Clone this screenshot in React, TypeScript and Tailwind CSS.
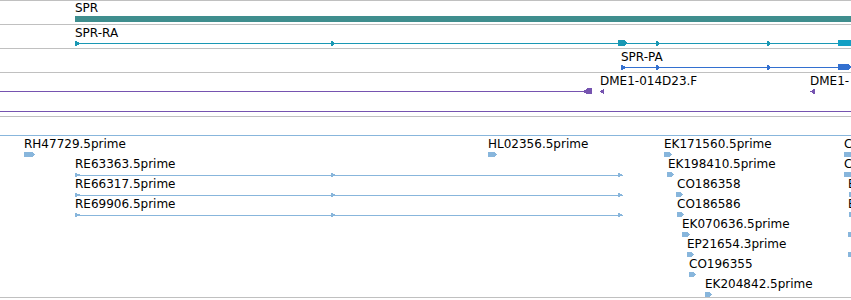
import React from "react";

type Label = { x: number; y: number; t: string };

const TEAL = "#3f8e8e";
const CYAN = "#1a98b4";
const BLUE = "#3370d0";
const PURPLE = "#7654b0";
const EST = "#88b6dc";

function right(x: number, w: number, cy: number, h = 5) {
  const t = cy - h / 2;
  const b = cy + h / 2;
  const k = Math.min(3, w);
  return `${x},${t} ${x + w - k},${t} ${x + w},${cy} ${x + w - k},${b} ${x},${b}`;
}
function tri(x: number, cy: number, w = 5, h = 6) {
  return `${x},${cy - h / 2} ${x + w},${cy} ${x},${cy + h / 2}`;
}
function triL(x: number, cy: number, w = 4, h = 6) {
  return `${x},${cy} ${x + w},${cy - h / 2} ${x + w},${cy + h / 2}`;
}

function Labels({ items }: { items: Label[] }) {
  return (
    <>
      {items.map((l, i) => (
        <span
          key={i}
          className="absolute whitespace-nowrap"
          style={{ left: l.x, top: l.y }}
        >
          {l.t}
        </span>
      ))}
    </>
  );
}

function Track({
  h,
  children,
  labels,
}: {
  h: number;
  children: React.ReactNode;
  labels: Label[];
}) {
  return (
    <div className="relative border-b border-[#c0c0c0]" style={{ height: h + 1 }}>
      <svg
        className="absolute left-0 top-0"
        width={851}
        height={h}
        viewBox={`0 0 851 ${h}`}
        shapeRendering="crispEdges"
      >
        {children}
      </svg>
      <Labels items={labels} />
    </div>
  );
}

const estRows: { labels: Label[]; glyphs: { x: number; w: number }[] }[] = [
  {
    labels: [
      { x: 24, y: 0, t: "RH47729.5prime" },
      { x: 488, y: 0, t: "HL02356.5prime" },
      { x: 664, y: 0, t: "EK171560.5prime" },
      { x: 844, y: 0, t: "C" },
    ],
    glyphs: [
      { x: 24, w: 11 },
      { x: 488, w: 9 },
      { x: 664, w: 8 },
      { x: 844, w: 9 },
    ],
  },
  {
    labels: [
      { x: 75, y: 0, t: "RE63363.5prime" },
      { x: 668, y: 0, t: "EK198410.5prime" },
      { x: 844, y: 0, t: "C" },
    ],
    glyphs: [
      { x: 667, w: 7 },
      { x: 844, w: 9 },
    ],
  },
  {
    labels: [
      { x: 75, y: 0, t: "RE66317.5prime" },
      { x: 677, y: 0, t: "CO186358" },
      { x: 848, y: 0, t: "E" },
    ],
    glyphs: [
      { x: 676, w: 7 },
      { x: 849, w: 4 },
    ],
  },
  {
    labels: [
      { x: 75, y: 0, t: "RE69906.5prime" },
      { x: 677, y: 0, t: "CO186586" },
      { x: 848, y: 0, t: "E" },
    ],
    glyphs: [
      { x: 677, w: 7 },
      { x: 849, w: 4 },
    ],
  },
  {
    labels: [{ x: 682, y: 0, t: "EK070636.5prime" }],
    glyphs: [
      { x: 682, w: 8 },
      { x: 848, w: 5 },
    ],
  },
  {
    labels: [{ x: 687, y: 0, t: "EP21654.3prime" }],
    glyphs: [
      { x: 687, w: 7 },
      { x: 848, w: 5 },
    ],
  },
  {
    labels: [{ x: 689, y: 0, t: "CO196355" }],
    glyphs: [{ x: 689, w: 7 }],
  },
  {
    labels: [{ x: 705, y: 0, t: "EK204842.5prime" }],
    glyphs: [{ x: 705, w: 7 }],
  },
];

export default function App() {
  const estLabels: Label[] = [];
  estRows.forEach((r, i) =>
    r.labels.forEach((l) => estLabels.push({ x: l.x, y: 20 + 20 * i, t: l.t }))
  );

  return (
    <div className="w-[851px] h-[300px] overflow-hidden bg-white text-black font-['DejaVu_Sans',sans-serif] text-[12px] leading-[14px]">
      <div className="border-t border-[#c0c0c0]">
        {/* SPR gene */}
        <Track h={23} labels={[{ x: 75, y: 0, t: "SPR" }]}>
          <rect x={75} y={15} width={776} height={6} fill={TEAL} />
        </Track>

        {/* SPR-RA */}
        <Track h={23} labels={[{ x: 75, y: 1, t: "SPR-RA" }]}>
          <rect x={75} y={18} width={776} height={1} fill={CYAN} />
          <polygon points={tri(75, 18.5, 6, 6)} fill={CYAN} />
          <polygon points={tri(331, 18.5, 5, 6)} fill={CYAN} />
          <polygon points={right(618, 9, 18, 6)} fill={CYAN} />
          <polygon points={tri(656, 18.5, 5, 6)} fill={CYAN} />
          <polygon points={tri(767, 18.5, 5, 6)} fill={CYAN} />
          <rect x={838} y={15} width={13} height={6} fill="#14a0c4" />
        </Track>

        {/* SPR-PA */}
        <Track h={23} labels={[{ x: 621, y: 1, t: "SPR-PA" }]}>
          <rect x={621} y={18} width={230} height={1} fill={BLUE} />
          <polygon points={tri(621, 18.5, 6, 6)} fill={BLUE} />
          <polygon points={tri(656, 18.5, 5, 6)} fill={BLUE} />
          <polygon points={tri(767, 18.5, 5, 6)} fill={BLUE} />
          <polygon points={right(838, 13, 18, 6)} fill={BLUE} />
        </Track>

        {/* DME1 */}
        <Track
          h={43}
          labels={[
            { x: 600, y: 1, t: "DME1-014D23.F" },
            { x: 810, y: 1, t: "DME1-" },
          ]}
        >
          <rect x={0} y={18} width={586} height={1} fill={PURPLE} />
          <polygon points={triL(583, 18.5, 4, 6)} fill={PURPLE} />
          <rect x={587} y={15} width={5} height={6} fill={PURPLE} />
          <polygon points={triL(600, 18.5, 4, 6)} fill={PURPLE} />
          <polygon points={triL(810, 18.5, 5, 6)} fill={PURPLE} />
          <rect x={0} y={38} width={851} height={1} fill={PURPLE} />
        </Track>

        {/* ESTs */}
        <Track h={180} labels={estLabels}>
          <rect x={0} y={18} width={851} height={1} fill={EST} />
          {[1, 2, 3].map((i) => {
            const cy = 38 + 20 * i;
            return (
              <g key={i}>
                <rect x={75} y={38 + 20 * i} width={548} height={1} fill={EST} />
                <polygon points={tri(75, cy, 6, 5)} fill={EST} />
                <polygon points={tri(331, cy, 5, 5)} fill={EST} />
                <polygon points={tri(618, cy, 5, 5)} fill={EST} />
              </g>
            );
          })}
          {estRows.map((r, i) =>
            r.glyphs.map((g, j) => (
              <polygon
                key={`${i}-${j}`}
                points={right(g.x, g.w, 37.5 + 20 * i, 5)}
                fill={EST}
              />
            ))
          )}
        </Track>
      </div>
    </div>
  );
}
